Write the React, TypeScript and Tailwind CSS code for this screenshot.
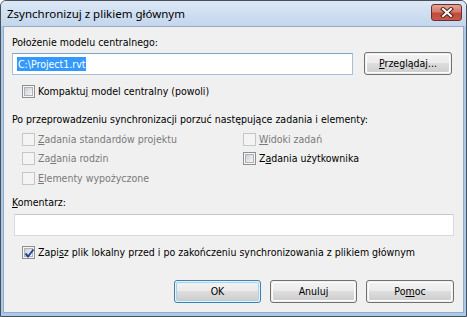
import React from "react";

const U = ({ children }: { children: React.ReactNode }) => (
  <span className="underline underline-offset-[1px] decoration-[1px]">{children}</span>
);

function CheckBox({ disabled, checked }: { disabled?: boolean; checked?: boolean }) {
  if (disabled) {
    return (
      <div className="w-[13px] h-[13px] shrink-0 border border-[#c6c6c6] bg-[#f4f4f4]" />
    );
  }
  return (
    <div className="relative w-[13px] h-[13px] shrink-0 border border-[#8e8f8f] bg-[#f6f6f6] p-[1px]">
      <div className="w-full h-full border border-[#aeb3b9] bg-gradient-to-br from-[#cbcfd5] to-[#f6f6f6]" />
      {checked && (
        <svg className="absolute left-[1px] top-[1px]" width="11" height="11" viewBox="0 0 11 11">
          <path d="M1.5 5.5 L4 8.5 L9.5 1.5" fill="none" stroke="#21459a" strokeWidth="2" strokeLinejoin="miter" />
        </svg>
      )}
    </div>
  );
}

function Row({
  children,
  disabled,
  checked,
}: {
  children: React.ReactNode;
  disabled?: boolean;
  checked?: boolean;
}) {
  return (
    <div className="flex items-center gap-[3px] h-[13px]">
      <CheckBox disabled={disabled} checked={checked} />
      <span className={disabled ? "text-[#7a7a7a] leading-[13px]" : "text-black leading-[13px]"}>
        {children}
      </span>
    </div>
  );
}

function Button({
  children,
  primary,
  className,
}: {
  children: React.ReactNode;
  primary?: boolean;
  className?: string;
}) {
  return (
    <div
      className={
        "h-[23px] rounded-[3px] border p-[1px] " +
        (primary ? "border-[#3c7fb1] " : "border-[#707070] ") +
        (className ?? "")
      }
    >
      <div
        className={
          "h-full w-full rounded-[2px] flex items-center justify-center text-black bg-[linear-gradient(to_bottom,#f2f2f2_0%,#ebebeb_50%,#dddddd_50%,#cfcfcf_100%)] border " +
          (primary ? "border-[#9fd6f5]" : "border-[#fcfcfc]")
        }
      >
        {children}
      </div>
    </div>
  );
}

export default function App() {
  return (
    <div
      className="w-[467px] h-[317px] overflow-hidden bg-white"
      style={{ fontFamily: '"DejaVu Sans Condensed", "Liberation Sans", sans-serif', fontStretch: "condensed" }}
    >
      <div className="w-[467px] h-[317px] flex flex-col rounded-t-[6px] border border-[#4a4f57] bg-[#a9cbeb]">
        {/* Title bar */}
        <div className="h-[25px] shrink-0 flex items-center justify-between pl-[6px] pr-[4px] rounded-t-[5px] bg-gradient-to-b from-[#dce8f6] to-[#c3d6ed]">
          <span
            className="text-[11.5px] text-black leading-none"
            style={{ fontFamily: '"Noto Sans", "Open Sans", sans-serif', fontStretch: "normal" }}
          >
            Zsynchronizuj z plikiem głównym
          </span>
          <div className="w-[31px] h-[17px] rounded-[3px] border border-[#6b2e2a] bg-[linear-gradient(to_bottom,#e4a597_0%,#d47a6c_45%,#c24a3c_55%,#c9594a_100%)] flex items-center justify-center mt-[-3px]">
            <svg width="14" height="11" viewBox="0 0 14 11">
              <path d="M3 2 L11 9 M11 2 L3 9" stroke="#4a2520" strokeWidth="4" strokeLinecap="square" />
              <path d="M3 2 L11 9 M11 2 L3 9" stroke="#ffffff" strokeWidth="2" strokeLinecap="square" />
            </svg>
          </div>
        </div>
        {/* Client */}
        <div className="flex-1 mx-[2px] mb-[3px] border border-[#97aac3] bg-[#f0f0f0] text-[10.5px] text-black flex flex-col pl-[8px] pr-[9px]">
          <div className="mt-[9px] h-[13px] leading-[13px]">Położenie modelu centralnego:</div>
          <div className="mt-[3px] flex items-center gap-[11px]">
            <div className="w-[341px] h-[22px] border border-[#a8bfd9] border-t-[#7da2ce] bg-white flex items-center pl-[4px]">
              <span className="bg-[#3399ff] text-white leading-[14px] px-[1px]">C:\Project1.rvt</span>
            </div>
            <Button className="w-[88px]">
              <span>
                <U>P</U>rzeglądaj...
              </span>
            </Button>
          </div>
          <div className="mt-[10px] pl-[10px]">
            <Row>
              Kompaktu<U>j</U> model centralny (powoli)
            </Row>
          </div>
          <div className="mt-[15px] h-[13px] leading-[13px]">
            Po przeprowadzeniu synchronizacji porzuć następujące zadania i elementy:
          </div>
          <div className="mt-[7px] pl-[10px] grid grid-cols-[221px_1fr] gap-y-[6px]">
            <Row disabled>
              <U>Z</U>adania standardów projektu
            </Row>
            <Row disabled>
              <U>W</U>idoki zadań
            </Row>
            <Row disabled>
              Za<U>d</U>ania rodzin
            </Row>
            <Row>
              Z<U>a</U>dania użytkownika
            </Row>
            <div className="mt-[1px]">
              <Row disabled>
                <U>E</U>lementy wypożyczone
              </Row>
            </div>
          </div>
          <div className="mt-[11px] h-[13px] leading-[13px]">
            <U>K</U>omentarz:
          </div>
          <div className="mt-[5px] ml-[2px] w-[440px] h-[22px] border border-[#d5dbe3] border-t-[#c2c8d0] bg-white" />
          <div className="mt-[10px] pl-[10px]">
            <Row checked>
              Zapi<U>s</U>z plik lokalny przed i po zakończeniu synchronizowania z plikiem głównym
            </Row>
          </div>
          <div className="mt-[21px] flex justify-end gap-[9px]">
            <Button primary className="w-[87px]">
              OK
            </Button>
            <Button className="w-[87px]">Anuluj</Button>
            <Button className="w-[88px]">
              <span>
                Po<U>m</U>oc
              </span>
            </Button>
          </div>
        </div>
      </div>
    </div>
  );
}
